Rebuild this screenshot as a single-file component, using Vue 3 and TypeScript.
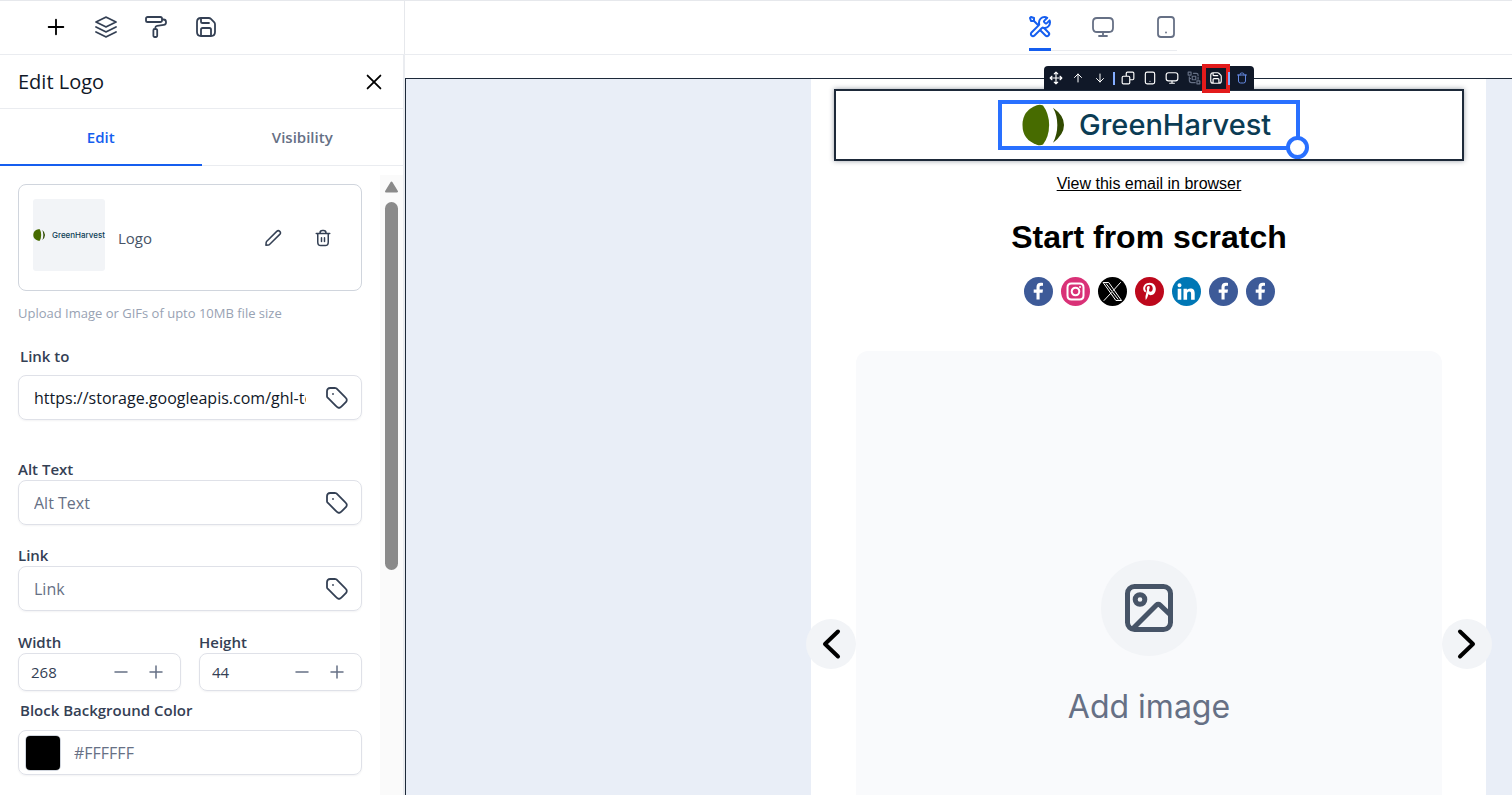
<script setup lang="ts">
import { ref } from 'vue'

type Shape = { d: string; fill?: boolean }

const icons: Record<string, string> = {
  plus: 'M12 4v16M4 12h16',
  minus: 'M4 12h16',
  close: 'M5 5l14 14M19 5L5 19',
  layers:
    'M2 12l9.64 4.82q.36.18.72 0L22 12M2 17l9.64 4.82q.36.18.72 0L22 17M2 7l9.64-4.82q.36-.18.72 0L22 7l-9.64 4.82q-.36.18-.72 0L2 7z',
  paint:
    'M3.6 2h12.8A1.6 1.6 0 0 1 18 3.600v1.800A1.600 1.600 0 0 1 16.400 7H3.600A1.600 1.600 0 0 1 2 5.400V3.600A1.600 1.600 0 0 1 3.600 2zM18 4.500h1.500A2.500 2.500 0 0 1 22 7v.500a2.500 2.500 0 0 1-2.200 2.480l-6.800.900a2 2 0 0 0-1.700 2V14M10.600 14h1.400a1.200 1.200 0 0 1 1.200 1.200v5.600a1.200 1.200 0 0 1-1.200 1.200h-1.400a1.200 1.200 0 0 1-1.200-1.200v-5.600a1.200 1.200 0 0 1 1.200-1.200z',
  save:
    'M7 3v3.400Q7 8 8.600 8H15M17 21v-6.400Q17 13 15.400 13H8.600Q7 13 7 14.600V21M21 9.300V17q0 4-4 4H7q-4 0-4-4V7q0-4 4-4h7.700q1.300 0 2.200.900l3.200 3.200q.900.900.900 2.200z',
  tools:
    'M6 6l4.500 4.500M6 6H3L2 3l1-1 3 1v3zM19.259 2.741L16.631 5.369C16.235 5.765 16.037 5.963 15.963 6.191a1 1 0 0 0 0 .618C16.037 7.037 16.235 7.235 16.631 7.631l.238.238C17.265 8.265 17.463 8.463 17.691 8.537a1 1 0 0 0 .618 0C18.537 8.463 18.735 8.265 19.131 7.869L21.589 5.411C21.854 6.055 22 6.760 22 7.500C22 10.538 19.538 13 16.500 13C16.134 13 15.776 12.964 15.430 12.896C14.944 12.800 14.700 12.752 14.553 12.767C14.396 12.782 14.319 12.806 14.180 12.880C14.050 12.950 13.919 13.081 13.657 13.343L6.500 20.500C5.672 21.328 4.328 21.328 3.500 20.500C2.672 19.672 2.672 18.328 3.500 17.500L10.657 10.343C10.919 10.081 11.050 9.950 11.120 9.819C11.194 9.681 11.218 9.603 11.233 9.447C11.248 9.299 11.200 9.056 11.104 8.570C11.036 8.224 11 7.866 11 7.500C11 4.462 13.462 2 16.500 2C17.505 2 18.448 2.270 19.259 2.741zM12 15l5.500 5.500C18.328 21.328 19.672 21.328 20.500 20.500C21.328 19.672 21.328 18.328 20.500 17.500L15.975 12.975C15.655 12.945 15.343 12.887 15.041 12.804C14.652 12.698 14.225 12.775 13.940 13.060L12 15z',
  monitor:
    'M8 21h8M12 17v4M6 3h12q4 0 4 4v6q0 4-4 4H6q-4 0-4-4V7q0-4 4-4z',
  phone:
    'M12 17.500h.01M7 2h10q3 0 3 3v14q0 3-3 3H7q-3 0-3-3V5q0-3 3-3z',
  pencil:
    'M2.900 18.200c.040-.380.060-.570.120-.740a2 2 0 0 1 .210-.450c.100-.150.240-.290.510-.560L17 3.200a2.800 2.800 0 0 1 4 4L7.700 20.400c-.270.270-.410.410-.560.510a2 2 0 0 1-.450.210c-.170.060-.360.080-.740.120l-3.400.300z',
  trash:
    'M16 6v-.800Q16 2 12.800 2h-1.600Q8 2 8 5.200V6M10 11.500v5M14 11.500v5M3 6h18M19 6v11.200Q19 22 15 22H9Q5 22 5 17.200V6',
  tag:
    'M8 8h.01M2 5.200v4.470c0 .490 0 .740.060.970a2 2 0 0 0 .240.580c.120.200.300.370.640.720l7.670 7.670c1.190 1.190 1.780 1.780 2.470 2a3 3 0 0 0 1.850 0c.690-.220 1.280-.810 2.470-2l2.210-2.210c1.190-1.190 1.780-1.780 2-2.470a3 3 0 0 0 0-1.850c-.220-.690-.810-1.280-2-2.470l-7.670-7.670c-.350-.350-.520-.520-.720-.640a2 2 0 0 0-.580-.240C10.410 2 10.160 2 9.670 2H5.200Q2 2 2 5.200z',
  move: 'M12 2v20M2 12h20M9 5l3-3 3 3M9 19l3 3 3-3M5 9l-3 3 3 3M19 9l3 3-3 3',
  up: 'M12 20V4M5 11l7-7 7 7',
  down: 'M12 4v16M5 13l7 7 7-7',
  copy: 'M4 9h9q2 0 2 2v9q0 2-2 2H4q-2 0-2-2v-9q0-2 2-2zM9 9V4q0-2 2-2h9q2 0 2 2v9q0 2-2 2h-5',
  group:
    'M2 2h5v5H2zM17 17h5v5h-5zM9 9h6v6H9zM11 4h5q3 0 3 3v1M19 11v3M4 10v6q0 4 4 4h6M4 13h2',
  bin: 'M3 6h18M16 6v-.800Q16 2 13 2h-2Q8 2 8 5.200V6M19 6v12Q19 22 15 22H9Q5 22 5 18V6',
}

const sideTools = [
  { icon: 'plus', label: 'Add element', dark: true },
  { icon: 'layers', label: 'Layers', dark: false },
  { icon: 'paint', label: 'Styles', dark: false },
  { icon: 'save', label: 'Saved templates', dark: false },
]
const views = [
  { icon: 'tools', label: 'Builder' },
  { icon: 'monitor', label: 'Desktop preview' },
  { icon: 'phone', label: 'Mobile preview' },
]
const blockTools = [
  { icon: 'move', label: 'Move' },
  { icon: 'up', label: 'Move up', tone: 'small' },
  { icon: 'down', label: 'Move down', tone: 'small' },
  { icon: '', label: '' },
  { icon: 'copy', label: 'Duplicate' },
  { icon: 'phone', label: 'Hide on mobile' },
  { icon: 'monitor', label: 'Hide on desktop' },
  { icon: 'group', label: 'Group', tone: 'dim' },
  { icon: 'save', label: 'Save block', tone: 'marked' },
  { icon: '', label: '' },
  { icon: 'bin', label: 'Delete', tone: 'small blue' },
]

const facebook: Shape[] = [
  { d: 'M15.600 22.500v-6.700h2.900l.500-3.300h-3.400v-2c0-1 .400-1.700 1.800-1.700H19V5.900c-.400-.100-1.300-.200-2.300-.200-2.600 0-4.200 1.500-4.200 4.300v2.500H9.700v3.300h2.800v6.700z', fill: true },
]
const socials: { name: string; color: string; shapes: Shape[] }[] = [
  { name: 'Facebook', color: '#3d5a98', shapes: facebook },
  {
    name: 'Instagram',
    color: '#d93177',
    shapes: [
      { d: 'M10.500 6.500h8q4 0 4 4v8q0 4-4 4h-8q-4 0-4-4v-8q0-4 4-4zM14.500 10.700a3.800 3.800 0 1 0 0 7.600a3.800 3.800 0 1 0 0-7.600zM19 9.900h.01' },
    ],
  },
  {
    name: 'X',
    color: '#000000',
    shapes: [
      { d: 'M5.500 5.500h5.200L23.500 23.500h-5.200zM22.500 5.500l-7.200 8M13.300 15.700L6 23.500M8.200 6.800L20 22.200' },
    ],
  },
  {
    name: 'Pinterest',
    color: '#bd081c',
    shapes: [
      { d: 'M14.800 5.800c-4.300 0-6.600 2.900-6.600 5.700 0 1.600.800 3.200 2.100 3.700.200.100.300 0 .400-.200l.300-1.100c0-.200 0-.200-.100-.400-1.500-2.200-.500-5.800 3.300-5.800 4.700 0 4.400 7 1.200 7-.900 0-1.500-.700-1.300-1.600.200-1 .700-2.100.700-2.800 0-2.100-3-1.800-3 .900 0 .900.300 1.400.300 1.400l-1.500 6.200c-.300 1.300 0 3.400.200 4.300 1.300-1.700 1.900-3.200 2.600-6 .400.700 1.300 1.100 2.200 1.100 3 0 5.200-2.700 5.200-6.200 0-3.400-2.600-6.200-6-6.200z', fill: true },
    ],
  },
  {
    name: 'LinkedIn',
    color: '#0077b5',
    shapes: [
      { d: 'M5.700 11.700h3.600v11H5.700zM7.500 6.200a2 2 0 1 1 0 4a2 2 0 1 1 0-4zM11.500 11.700h3.400v1.500c.500-.900 1.700-1.700 3.300-1.700 3.500 0 4.500 2 4.500 4.900v6.300h-3.600v-5.600c0-1.400-.100-2.700-1.800-2.700s-2.200 1.200-2.200 2.600v5.700h-3.600z', fill: true },
    ],
  },
  { name: 'Facebook', color: '#3d5a98', shapes: facebook },
  { name: 'Facebook', color: '#3d5a98', shapes: facebook },
]

const linkTo = ref('https://storage.googleapis.com/ghl-test/media/logo.png')
const altText = ref('')
const link = ref('')
const sizes = ref([
  { id: 'width', label: 'Width', value: 268 },
  { id: 'height', label: 'Height', value: 44 },
])
const swatch = ref('#000000')
const background = ref('')
const activeTab = ref('Edit')
const activeView = ref(0)
</script>

<template>
  <div class="app">
    <header class="topbar">
      <div class="side-tools">
        <button v-for="t in sideTools" :key="t.label" class="tool" :class="{ dark: t.dark }" :aria-label="t.label">
          <svg viewBox="0 0 24 24" class="icon"><path :d="icons[t.icon]" /></svg>
        </button>
      </div>
      <nav class="views">
        <button
          v-for="(v, i) in views"
          :key="v.icon"
          class="view"
          :class="{ active: i === activeView }"
          :aria-label="v.label"
          @click="activeView = i"
        >
          <svg viewBox="0 0 24 24" class="icon"><path :d="icons[v.icon]" /></svg>
        </button>
      </nav>
    </header>

    <div class="body">
      <aside class="sidebar">
        <div class="panel-head">
          <h2>Edit Logo</h2>
          <button class="close" aria-label="Close">
            <svg viewBox="0 0 24 24" class="icon"><path :d="icons.close" /></svg>
          </button>
        </div>
        <div class="tabs" role="tablist">
          <button
            v-for="tab in ['Edit', 'Visibility']"
            :key="tab"
            role="tab"
            class="tab"
            :class="{ active: tab === activeTab }"
            @click="activeTab = tab"
          >
            {{ tab }}
          </button>
        </div>

        <div class="scroll">
          <form class="fields" @submit.prevent>
            <div class="media">
              <div class="thumb">
                <svg viewBox="0 0 44 44" class="thumb-mark">
                  <path d="M19 1h6Q30 10 30 22T25 43h-6Q1 38 1 22T19 1z" fill="#476b00" />
                  <path d="M34 4q10 8 10 18T34 40q4-8 4-18T34 4z" fill="#314a00" />
                </svg>
                <span>GreenHarvest</span>
              </div>
              <span class="media-name">Logo</span>
              <button class="media-btn" aria-label="Edit image">
                <svg viewBox="0 0 24 24" class="icon"><path :d="icons.pencil" /></svg>
              </button>
              <button class="media-btn" aria-label="Remove image">
                <svg viewBox="0 0 24 24" class="icon"><path :d="icons.trash" /></svg>
              </button>
            </div>
            <p class="hint">Upload Image or GIFs of upto 10MB file size</p>

            <label class="label inset" for="link-to">Link to</label>
            <div class="control link-to">
              <input id="link-to" v-model="linkTo" type="text" />
              <button class="tag" aria-label="Insert value">
                <svg viewBox="0 0 24 24" class="icon"><path :d="icons.tag" /></svg>
              </button>
            </div>

            <label class="label" for="alt-text">Alt Text</label>
            <div class="control">
              <input id="alt-text" v-model="altText" type="text" placeholder="Alt Text" />
              <button class="tag" aria-label="Insert value">
                <svg viewBox="0 0 24 24" class="icon"><path :d="icons.tag" /></svg>
              </button>
            </div>

            <label class="label next" for="link">Link</label>
            <div class="control">
              <input id="link" v-model="link" type="text" placeholder="Link" />
              <button class="tag" aria-label="Insert value">
                <svg viewBox="0 0 24 24" class="icon"><path :d="icons.tag" /></svg>
              </button>
            </div>

            <div class="sizes">
              <div v-for="s in sizes" :key="s.id" class="size">
                <label class="label" :for="s.id">{{ s.label }}</label>
                <div class="control stepper">
                  <input :id="s.id" v-model.number="s.value" type="text" inputmode="numeric" />
                  <button class="step" :aria-label="'Decrease ' + s.label" @click="s.value--">
                    <svg viewBox="0 0 24 24" class="icon"><path :d="icons.minus" /></svg>
                  </button>
                  <button class="step" :aria-label="'Increase ' + s.label" @click="s.value++">
                    <svg viewBox="0 0 24 24" class="icon"><path :d="icons.plus" /></svg>
                  </button>
                </div>
              </div>
            </div>

            <label class="label inset color-label" for="background">Block Background Color</label>
            <div class="control color">
              <input v-model="swatch" class="swatch" type="color" aria-label="Pick block background color" />
              <input id="background" v-model="background" type="text" placeholder="#FFFFFF" />
            </div>
          </form>
          <div class="scrollbar" aria-hidden="true">
            <svg viewBox="0 0 14 12" class="scroll-arrow"><path d="M7 1.500L12.500 10.500H1.500z" /></svg>
            <div class="scroll-thumb"></div>
          </div>
        </div>
      </aside>

      <main class="canvas">
        <article class="email">
          <section class="logo-block">
            <div class="logo">
              <svg viewBox="0 0 44 44" class="logo-mark">
                <path d="M15.500 1.200Q19 .300 22 1.500Q28.400 10 28.400 22T22 42.500Q19 43.700 15.500 42.600Q.500 37.500.500 22T15.500 1.200z" fill="#476b00" />
                <path d="M32.500 4Q44 12 44 22T32.500 40.500Q37 32 37 22T32.500 4z" fill="#314a00" />
              </svg>
              <span class="logo-name">GreenHarvest</span>
              <span class="handle"></span>
            </div>
            <div class="block-tools" role="toolbar" aria-label="Block actions">
              <template v-for="(b, i) in blockTools" :key="i">
                <button v-if="b.icon" class="block-tool" :class="b.tone" :aria-label="b.label">
                  <svg viewBox="0 0 24 24" class="icon"><path :d="icons[b.icon]" /></svg>
                </button>
                <span v-else class="divider"></span>
              </template>
            </div>
          </section>

          <a class="browser-link" href="#">View this email in browser</a>
          <h1>Start from scratch</h1>

          <div class="socials">
            <a v-for="(s, i) in socials" :key="i" href="#" :aria-label="s.name">
              <svg viewBox="0 0 29 29">
                <circle cx="14.5" cy="14.5" r="14.5" :fill="s.color" />
                <path
                  v-for="p in s.shapes"
                  :key="p.d"
                  :d="p.d"
                  :class="[p.fill ? 'solid' : 'line', { thin: s.name === 'X' }]"
                />
              </svg>
            </a>
          </div>

          <section class="carousel">
            <div class="placeholder">
              <div class="placeholder-icon">
                <svg viewBox="0 0 48 48">
                  <rect x="2.500" y="2.500" width="43" height="43" rx="7" />
                  <circle cx="15" cy="15.500" r="4.800" />
                  <path d="M8 44.500L31.500 21a2.500 2.500 0 0 1 3.500 0L45 30.500" />
                </svg>
              </div>
              <span>Add image</span>
            </div>
            <button class="arrow prev" aria-label="Previous">
              <svg viewBox="0 0 50 50"><path d="M32 12.500L19 25l13 12.500" /></svg>
            </button>
            <button class="arrow next-slide" aria-label="Next">
              <svg viewBox="0 0 50 50"><path d="M18 12.500L31 25 18 37.500" /></svg>
            </button>
          </section>
        </article>
      </main>
    </div>
  </div>
</template>

<style>
body {
  margin: 0;
}
</style>

<style scoped>
* {
  box-sizing: border-box;
}
.app {
  display: flex;
  flex-direction: column;
  height: 100vh;
  overflow: hidden;
  background: #fff;
  color: #344054;
  font-family: 'Open Sans', 'Noto Sans', sans-serif;
}
button {
  display: flex;
  flex: none;
  align-items: center;
  justify-content: center;
  padding: 0;
  border: 0;
  background: none;
  color: inherit;
  font: inherit;
  cursor: pointer;
}
input {
  min-width: 0;
  padding: 0;
  border: 0;
  outline: 0;
  background: none;
  color: inherit;
  font: inherit;
}
.icon {
  display: block;
  flex: none;
  fill: none;
  stroke: currentColor;
  stroke-width: 2;
  stroke-linecap: round;
  stroke-linejoin: round;
}

.topbar {
  display: flex;
  flex: none;
  height: 55px;
  border-top: 1px solid #e6e8ec;
  border-bottom: 1px solid #eaecf0;
}
.side-tools {
  display: flex;
  align-items: center;
  gap: 26px;
  width: 405px;
  padding: 0 0 2px 44px;
  border-right: 1px solid #e6e8ec;
}
.tool {
  width: 24px;
  height: 24px;
}
.tool .icon {
  width: 24px;
  height: 24px;
  stroke-width: 1.8;
}
.tool.dark {
  color: #000;
}
.tool.dark .icon {
  width: 22px;
  height: 22px;
  stroke-width: 2;
}
.views {
  display: flex;
  flex: 1;
  align-items: flex-start;
  justify-content: flex-end;
  padding-right: 335px;
}
.view {
  width: 63px;
  height: 50px;
  padding-left: 41px;
  border-bottom: 1px solid #eaecf0;
  color: #667085;
}
.view .icon {
  width: 24px;
  height: 24px;
  margin-bottom: -3px;
  stroke-width: 1.8;
}
.view.active {
  width: 22px;
  padding-left: 0;
  border-bottom: 3px solid #155eef;
  color: #155eef;
}
.view.active .icon {
  margin-bottom: -5px;
  stroke-width: 2;
}

.body {
  display: flex;
  flex: 1;
  min-height: 0;
}
.sidebar {
  display: flex;
  flex: none;
  flex-direction: column;
  width: 405px;
  border-right: 2px solid #eaecf0;
}
.panel-head {
  display: flex;
  flex: none;
  align-items: center;
  justify-content: space-between;
  height: 54px;
  padding: 0 19px 0 18px;
  border-bottom: 1px solid #eaecf0;
}
h2 {
  margin: 0;
  color: #101828;
  font-size: 20px;
  font-weight: 400;
  line-height: 28px;
}
.close {
  width: 20px;
  height: 20px;
  color: #000;
}
.close .icon {
  width: 22px;
  height: 22px;
}
.tabs {
  display: flex;
  flex: none;
  height: 57px;
  border-bottom: 1px solid #eaecf0;
}
.tab {
  flex: 1;
  height: 57px;
  border-bottom: 2px solid transparent;
  color: #667085;
  font-size: 15px;
  font-weight: 600;
}
.tab.active {
  border-bottom-color: #155eef;
  color: #155eef;
}

.scroll {
  display: flex;
  flex: 1;
  min-height: 0;
}
.fields {
  display: flex;
  flex: 1;
  flex-direction: column;
  min-width: 0;
  padding: 18px 18px 0;
}
.media {
  display: flex;
  flex: none;
  align-items: center;
  height: 107px;
  padding: 0 28px 0 14px;
  border: 1px solid #d0d5dd;
  border-radius: 8px;
}
.thumb {
  display: flex;
  align-items: center;
  align-self: flex-start;
  justify-content: space-between;
  width: 72px;
  height: 72px;
  margin: 14px 13px 0 0;
  border-radius: 3px;
  background: #f2f4f7;
  color: #0b3c54;
  font-family: Inter, sans-serif;
  font-size: 8px;
  font-weight: 500;
}
.thumb-mark {
  width: 12px;
  height: 12px;
}
.media-name {
  flex: 1;
  color: #475467;
  font-size: 15px;
}
.media-btn {
  width: 20px;
  height: 20px;
}
.media-btn + .media-btn {
  margin-left: 30px;
}
.media-btn .icon {
  width: 18px;
  height: 18px;
}
.hint {
  margin: 12px 0 23px;
  color: #98a2b3;
  font-size: 13px;
  line-height: 20px;
}
.label {
  color: #344054;
  font-size: 15px;
  font-weight: 600;
  line-height: 20px;
}
.label.inset {
  padding-left: 2px;
}
.label.next {
  margin-top: 20px;
}
.control {
  display: flex;
  flex: none;
  align-items: center;
  height: 45px;
  margin-top: 1px;
  padding: 0 12px 0 15px;
  border: 1px solid #dfe1e8;
  border-radius: 8px;
  box-shadow: 0 1px 2px rgba(16, 24, 40, 0.05);
  color: #101828;
  font-size: 16px;
}
.control input[type='text'] {
  flex: 1;
  width: 100%;
  height: 100%;
}
.control input::placeholder {
  color: #667085;
  opacity: 1;
}
.link-to {
  margin-top: 9px;
  margin-bottom: 39px;
}
.tag {
  width: 24px;
  height: 24px;
  margin-left: 19px;
  color: #344054;
}
.tag .icon {
  width: 24px;
  height: 24px;
  stroke-width: 1.8;
}
.sizes {
  display: flex;
  gap: 18px;
  margin-top: 21px;
}
.size {
  display: flex;
  flex: 1;
  flex-direction: column;
  min-width: 0;
}
.stepper {
  height: 38px;
  padding: 0 14px 0 12px;
  color: #344054;
  font-size: 15px;
}
.step {
  width: 20px;
  height: 20px;
  margin-left: 15px;
  color: #667085;
}
.step .icon {
  width: 18px;
  height: 18px;
}
.color-label {
  margin-top: 9px;
}
.control.color {
  margin-top: 10px;
  padding-left: 6px;
}
.swatch {
  width: 36px;
  height: 36px;
  margin-right: 13px;
  border: 1px solid #d0d5dd;
  border-radius: 5px;
  overflow: hidden;
}
.swatch::-webkit-color-swatch-wrapper {
  padding: 0;
}
.swatch::-webkit-color-swatch {
  border: 0;
}
.scrollbar {
  display: flex;
  flex: none;
  flex-direction: column;
  align-items: center;
  width: 23px;
  margin-top: 9px;
  padding-top: 6px;
  background: #fafafa;
}
.scroll-arrow {
  flex: none;
  width: 15px;
  height: 12px;
  fill: #8a8a8a;
  stroke: #8a8a8a;
  stroke-width: 2;
  stroke-linejoin: round;
}
.scroll-thumb {
  width: 13px;
  height: 60%;
  margin-top: 9px;
  border-radius: 7px;
  background: #8a8a8a;
}

.canvas {
  display: flex;
  flex: 1;
  justify-content: flex-end;
  min-width: 0;
  margin-top: 23px;
  padding-right: 26px;
  border-top: 1px solid #1d2939;
  border-left: 1px solid #1d2939;
  background: #e9eef7;
}
.email {
  display: flex;
  flex: none;
  flex-direction: column;
  align-items: center;
  width: 675px;
  padding: 10px 22px 0 23px;
  background: #fff;
  color: #000;
  font-family: 'Liberation Sans', Arial, sans-serif;
}
.logo-block {
  position: relative;
  display: flex;
  flex: none;
  align-items: center;
  justify-content: center;
  width: 100%;
  height: 72px;
  border: 2px solid #1d2939;
  box-shadow: 0 0 5px rgba(29, 41, 57, 0.45);
}
.logo {
  position: relative;
  display: flex;
  align-items: center;
  width: 302px;
  height: 50px;
  padding-left: 20px;
  border: 4px solid #2970ff;
}
.logo-mark {
  width: 42px;
  height: 42px;
  margin-right: 15px;
}
.logo-name {
  color: #0b3c54;
  font-family: Inter, sans-serif;
  font-size: 29px;
  font-weight: 500;
  line-height: 42px;
}
.handle {
  position: absolute;
  right: -13px;
  bottom: -13px;
  width: 23px;
  height: 23px;
  border: 4px solid #2970ff;
  border-radius: 50%;
  background: #fff;
}
.block-tools {
  position: absolute;
  top: -25px;
  left: 208px;
  display: flex;
  align-items: center;
  height: 24px;
  padding: 0 1px;
  border-radius: 4px 4px 0 0;
  background: #101828;
  color: #fff;
}
.block-tool {
  width: 22px;
  height: 22px;
}
.block-tool .icon {
  width: 14px;
  height: 14px;
}
.block-tool.small .icon {
  width: 12px;
  height: 12px;
}
.block-tool.dim {
  color: #667085;
}
.block-tool.blue {
  color: #6488e0;
}
.block-tool.marked {
  width: 28px;
  height: 29px;
  margin: 0 -3px;
  border: 4px solid #e31b1b;
}
.divider {
  width: 2px;
  height: 13px;
  margin: 0 2px;
  background: #84adff;
}
.marked + .divider {
  margin: 0 1px;
}
.browser-link {
  margin-top: 11px;
  color: #000;
  font-size: 16px;
  line-height: 24px;
}
h1 {
  margin: 21px 0 20px;
  font-size: 32px;
  font-weight: 700;
  line-height: 40px;
}
.socials {
  display: flex;
  gap: 8px;
}
.socials a,
.socials svg {
  display: block;
  width: 29px;
  height: 29px;
}
.solid {
  fill: #fff;
}
.line {
  fill: none;
  stroke: #fff;
  stroke-width: 2;
  stroke-linecap: round;
  stroke-linejoin: round;
}
.line.thin {
  stroke-width: 1;
}
.carousel {
  position: relative;
  flex: none;
  width: 586px;
  margin-top: 45px;
}
.placeholder {
  display: flex;
  flex-direction: column;
  align-items: center;
  height: 585px;
  padding-top: 209px;
  border-radius: 12px;
  background: #f9fafc;
  color: #667085;
  font-family: Inter, sans-serif;
  font-size: 32px;
  line-height: 40px;
}
.placeholder-icon {
  display: flex;
  align-items: center;
  justify-content: center;
  width: 96px;
  height: 96px;
  margin-bottom: 31px;
  border-radius: 50%;
  background: #f2f4f7;
}
.placeholder-icon svg {
  width: 48px;
  height: 48px;
  fill: none;
  stroke: #475467;
  stroke-width: 5;
}
.arrow {
  position: absolute;
  top: 50%;
  width: 50px;
  height: 50px;
  margin-top: -25px;
  border-radius: 50%;
  background: #f2f4f7;
}
.prev {
  right: 100%;
}
.next-slide {
  left: 100%;
}
.arrow svg {
  width: 50px;
  height: 50px;
  fill: none;
  stroke: #000;
  stroke-width: 4;
  stroke-linecap: round;
  stroke-linejoin: round;
}
</style>
